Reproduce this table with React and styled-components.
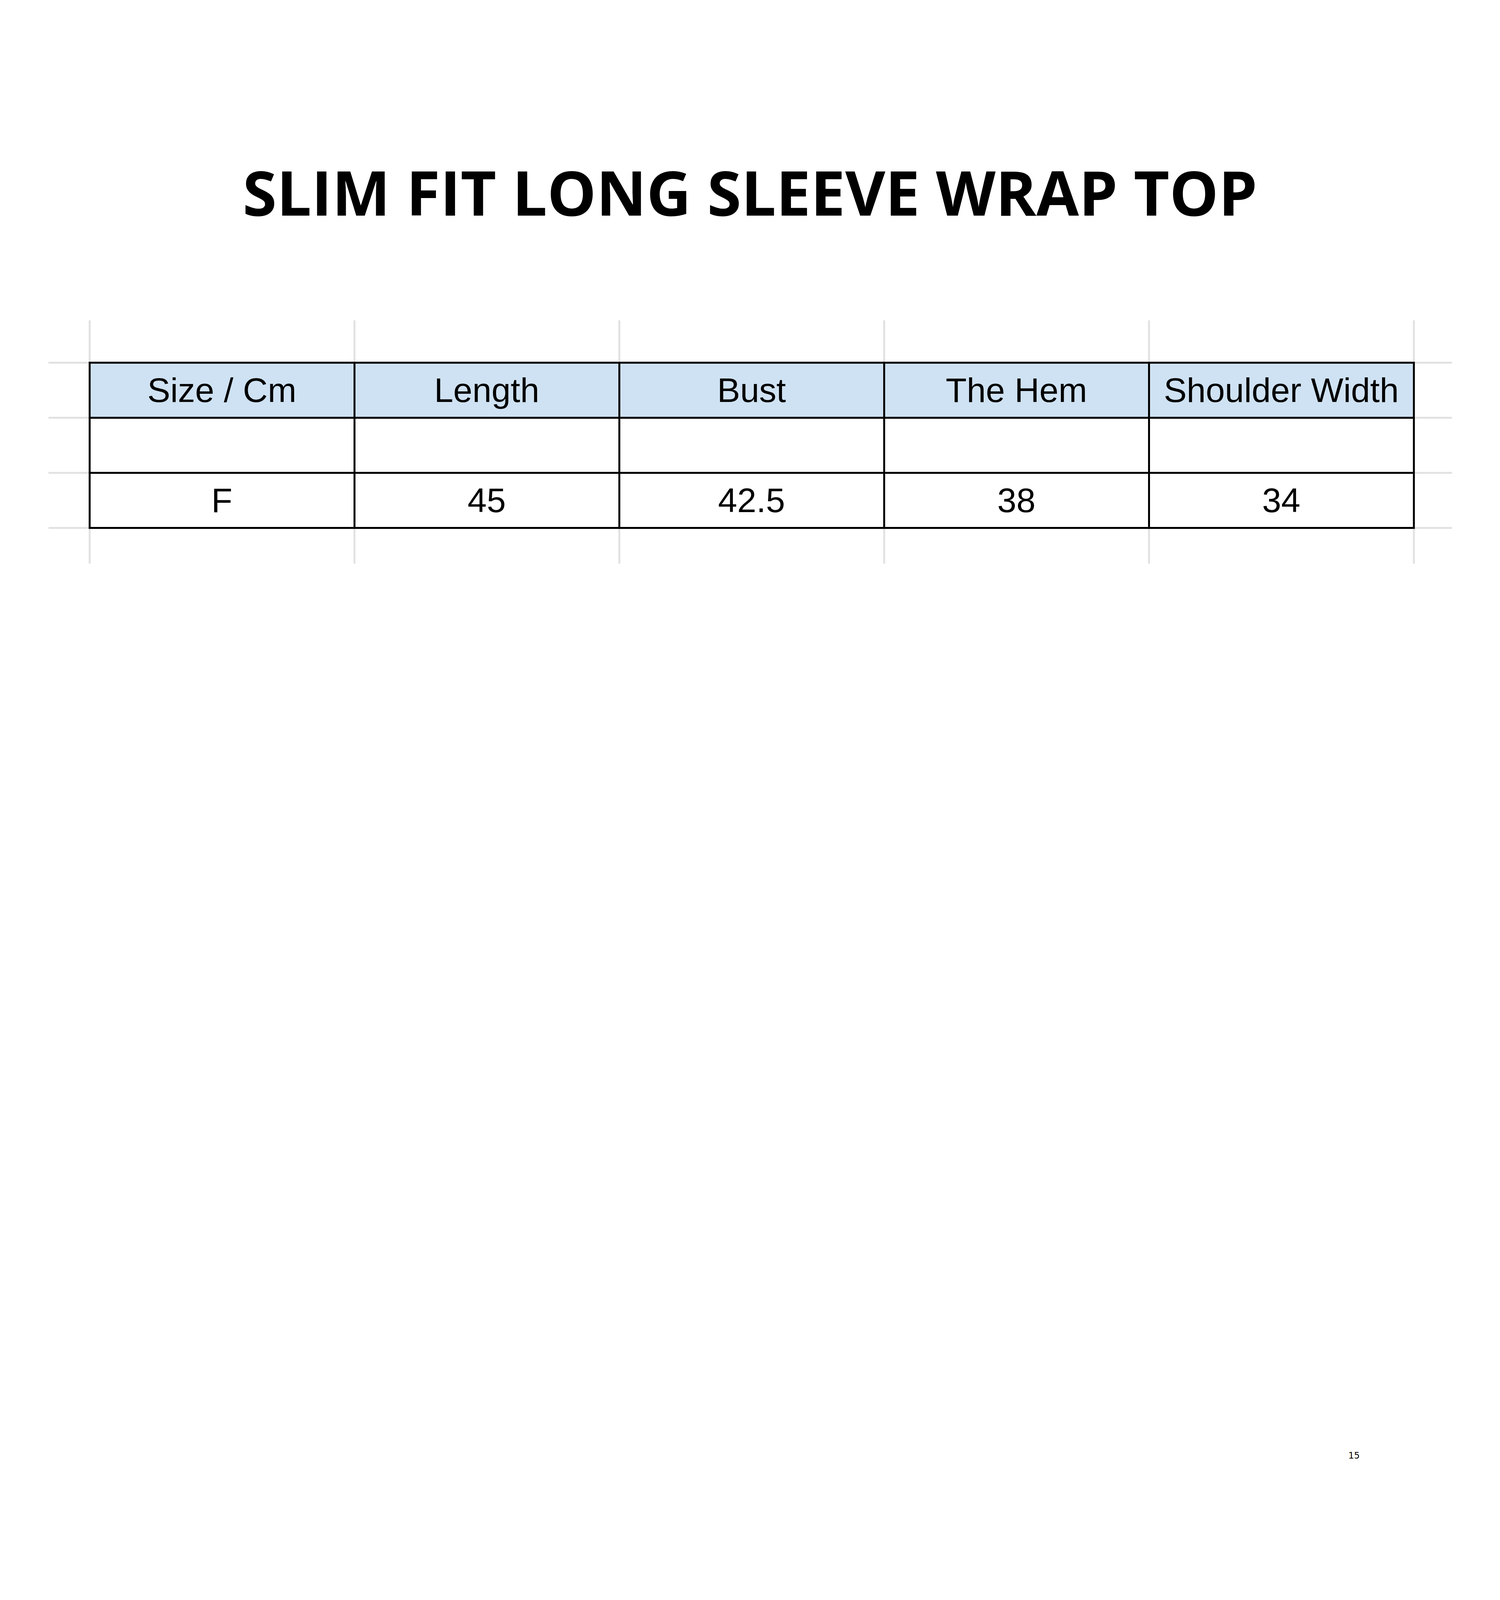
import React from 'react'
import styled, { createGlobalStyle } from 'styled-components'

const GlobalStyle = createGlobalStyle`
  html, body {
    margin: 0;
    padding: 0;
    background: #ffffff;
  }
`

const Page = styled.div`
  width: 100%;
  height: 100vh;
  display: flex;
  flex-direction: column;
  align-items: center;
  background: #ffffff;
  box-sizing: border-box;
  padding-top: 412px;
  overflow: hidden;
`

const Title = styled.h1`
  margin: 0;
  font-family: "Open Sans", "Noto Sans", sans-serif;
  font-weight: 700;
  font-size: 158px;
  line-height: 158px;
  color: #000;
  letter-spacing: 0;
`

// the spreadsheet crop: gaps are the light grid lines
const Sheet = styled.div`
  margin-top: 250px;
  display: grid;
  grid-template-columns: 103px repeat(5, 673px) 95px;
  grid-template-rows: 106px repeat(3, 136px) 89px;
  gap: 5px;
  background: #e2e2e2;
`

const Blank = styled.div`
  background: #ffffff;
`

const Chart = styled.div`
  grid-column: 2 / 7;
  grid-row: 2 / 5;
  display: grid;
  grid-template-columns: repeat(5, 673px);
  grid-template-rows: repeat(3, 136px);
  gap: 5px;
  background: #000;
  outline: 5px solid #000;
`

const Cell = styled.div`
  display: flex;
  align-items: center;
  justify-content: center;
  background: ${p => (p.$head ? '#cfe2f3' : '#ffffff')};
  font-family: "Liberation Sans", Arial, sans-serif;
  font-size: 88px;
  color: #000;
  white-space: nowrap;
`

const Footer = styled.div`
  margin-top: auto;
  align-self: stretch;
  display: flex;
  justify-content: flex-end;
  padding: 0 359px 356px 0;
`

const PageNo = styled.span`
  font-family: "DejaVu Sans", sans-serif;
  font-size: 23px;
  line-height: 28px;
  color: #000;
`

const heads = ['Size / Cm', 'Length', 'Bust', 'The Hem', 'Shoulder Width']
const rows = [
  ['', '', '', '', ''],
  ['F', '45', '42.5', '38', '34'],
]

const App = () => {
  // outer ring of plain sheet cells: 7 cols x 5 rows minus the 5x3 chart
  const blanks = []
  for (let r = 0; r < 5; r++) {
    for (let c = 0; c < 7; c++) {
      const inside = r >= 1 && r <= 3 && c >= 1 && c <= 5
      if (!inside) {
        blanks.push(<Blank key={r + '-' + c} style={{ gridRow: r + 1, gridColumn: c + 1 }} />)
      }
    }
  }

  return (
    <>
      <GlobalStyle />
      <Page>
        <Title>SLIM FIT LONG SLEEVE WRAP TOP</Title>
        <Sheet>
          {blanks}
          <Chart>
            {heads.map(h => (
              <Cell $head key={h}>{h}</Cell>
            ))}
            {rows.map((row, i) =>
              row.map((v, j) => <Cell key={i + '-' + j}>{v}</Cell>)
            )}
          </Chart>
        </Sheet>
        <Footer>
          <PageNo>15</PageNo>
        </Footer>
      </Page>
    </>
  )
}

export default App
